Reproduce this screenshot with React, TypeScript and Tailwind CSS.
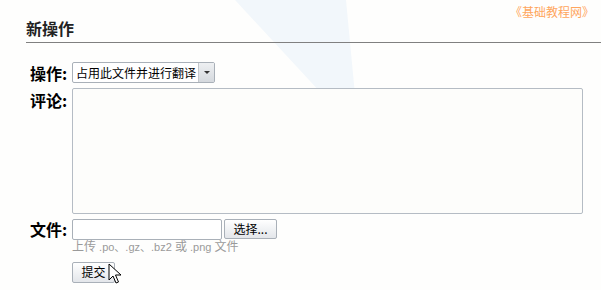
import React from 'react';

const cjk = { fontFamily: '"Noto Sans CJK SC", "Liberation Sans", sans-serif' };
const latinFirst = { fontFamily: '"Liberation Sans", "Noto Sans CJK SC", sans-serif' };

function Cursor() {
  return (
    <svg className="absolute left-[36px] top-[5px]" width="14" height="22" viewBox="0 0 14 22">
      <path d="M1 1 L1 17 L5 13 L8 20 L10.5 19 L7.5 12 L13 12 Z" fill="#fff" stroke="#000" strokeWidth="1" strokeLinejoin="miter" />
    </svg>
  );
}

export default function App() {
  return (
    <div className="relative w-[601px] h-[290px] overflow-hidden bg-[#fefefd]" style={cjk}>
      {/* background wedge */}
      <svg className="absolute left-0 top-0" width="601" height="290" viewBox="0 0 601 290">
        <polygon points="235,0 346,0 365,200 420,200" fill="#f2f7fb" />
      </svg>

      <div className="relative pl-[26px]">
        {/* header */}
        <div className="flex justify-between items-start border-b border-[#808080] h-[43px]">
          <h2 className="pt-[18px] text-[16px] leading-[20px] font-bold text-[#222]">新操作</h2>
          <span className="pt-[5px] pr-[7px] text-[12px] leading-[14px] text-[#ffa65e]">《基础教程网》</span>
        </div>

        {/* form */}
        <div className="pt-[19px] flex flex-col">
          <div className="flex items-center h-[21px]">
            <label className="w-[46px] shrink-0 pl-[4px] text-[16px] font-bold text-black leading-[20px]">操作:</label>
            <div className="relative w-[143px] h-[21px] shrink-0">
              <select className="appearance-none block w-full h-[21px] border border-[#a9b0b8] rounded-[2px] bg-white pl-[3px] text-[12px] leading-[19px] text-black">
                <option>占用此文件并进行翻译</option>
              </select>
              <div className="absolute right-[1px] top-[1px] h-[19px] w-[16px] border-l border-[#c3c7cc] bg-gradient-to-b from-[#eef0f2] to-[#d5d9de] flex items-center justify-center pointer-events-none">
                <div className="w-0 h-0 border-l-[3px] border-r-[3px] border-t-[3px] border-l-transparent border-r-transparent border-t-[#333]" />
              </div>
            </div>
          </div>

          <div className="flex mt-[5px]">
            <label className="w-[46px] shrink-0 pl-[4px] pt-[2px] text-[16px] font-bold text-black leading-[20px]">评论:</label>
            <textarea className="block w-[511px] h-[126px] shrink-0 border border-[#b5bcc4] rounded-[2px] bg-[#fdfdfb] resize-none" />
          </div>

          <div className="flex items-center mt-[4px] h-[22px]">
            <label className="w-[46px] shrink-0 pl-[4px] text-[16px] font-bold text-black leading-[20px]">文件:</label>
            <input type="text" className="w-[150px] h-[21px] shrink-0 border border-[#a9b0b8] rounded-[2px] bg-white" />
            <button className="ml-[2px] w-[53px] h-[20px] shrink-0 border border-[#a9b0b8] rounded-[2px] bg-gradient-to-b from-white to-[#e3e6ea] text-[12px] leading-[16px] text-black">
              选择...
            </button>
          </div>
          <div className="ml-[46px] text-[12px] leading-[14px] text-[#9a9a9a]" style={latinFirst}>
            上传<span className="text-[11px]"> .po、.gz、.bz2 </span>或<span className="text-[11px]"> .png </span>文件
          </div>

          <div className="relative ml-[46px] mt-[4px] w-[44px]">
            <button className="w-[43px] h-[21px] border border-[#a9b0b8] rounded-[2px] bg-gradient-to-b from-white to-[#e3e6ea] text-[12px] leading-[16px] text-black">
              提交
            </button>
            <Cursor />
          </div>
        </div>
      </div>
    </div>
  );
}
